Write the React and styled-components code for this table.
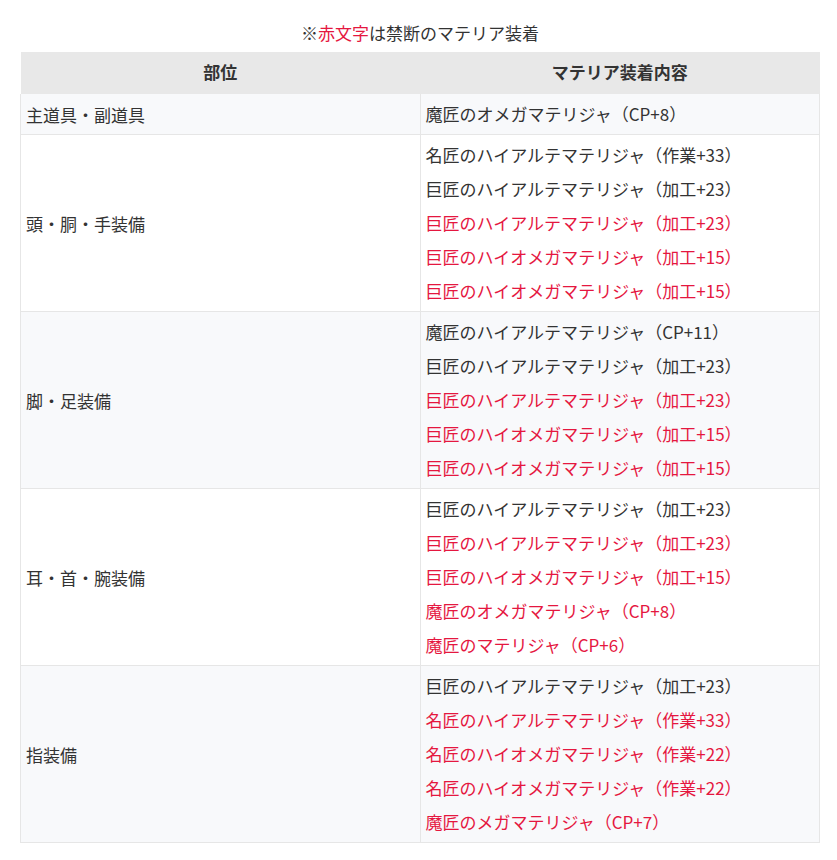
import React from 'react';
import styled, { createGlobalStyle } from 'styled-components';

const GlobalStyle = createGlobalStyle`
    body {
        margin: 0;
        background: #ffffff;
        font-family: "Noto Sans CJK JP", "Noto Sans", sans-serif;
        color: #333333;
    }
`

const rows = [
    { part: '主道具・副道具', items: [['魔匠のオメガマテリジャ（CP+8）', false]] },
    {
        part: '頭・胴・手装備',
        items: [
            ['名匠のハイアルテマテリジャ（作業+33）', false],
            ['巨匠のハイアルテマテリジャ（加工+23）', false],
            ['巨匠のハイアルテマテリジャ（加工+23）', true],
            ['巨匠のハイオメガマテリジャ（加工+15）', true],
            ['巨匠のハイオメガマテリジャ（加工+15）', true],
        ],
    },
    {
        part: '脚・足装備',
        items: [
            ['魔匠のハイアルテマテリジャ（CP+11）', false],
            ['巨匠のハイアルテマテリジャ（加工+23）', false],
            ['巨匠のハイアルテマテリジャ（加工+23）', true],
            ['巨匠のハイオメガマテリジャ（加工+15）', true],
            ['巨匠のハイオメガマテリジャ（加工+15）', true],
        ],
    },
    {
        part: '耳・首・腕装備',
        items: [
            ['巨匠のハイアルテマテリジャ（加工+23）', false],
            ['巨匠のハイアルテマテリジャ（加工+23）', true],
            ['巨匠のハイオメガマテリジャ（加工+15）', true],
            ['魔匠のオメガマテリジャ（CP+8）', true],
            ['魔匠のマテリジャ（CP+6）', true],
        ],
    },
    {
        part: '指装備',
        items: [
            ['巨匠のハイアルテマテリジャ（加工+23）', false],
            ['名匠のハイアルテマテリジャ（作業+33）', true],
            ['名匠のハイオメガマテリジャ（作業+22）', true],
            ['名匠のハイオメガマテリジャ（作業+22）', true],
            ['魔匠のメガマテリジャ（CP+7）', true],
        ],
    },
];

export default function App() {
    return (
        <>
            <GlobalStyle />
            <Wrapper>
                {/* note above the table */}
                <Caption>
                    ※<Red>赤文字</Red>は禁断のマテリア装着
                </Caption>
                <Table>
                    <thead>
                        <tr>
                            <Th>部位</Th>
                            <Th>マテリア装着内容</Th>
                        </tr>
                    </thead>
                    <tbody>
                        {rows.map((row, i) => (
                            <Row key={row.part} $odd={i % 2 === 0}>
                                <Td>{row.part}</Td>
                                <Td>
                                    {row.items.map(([text, red], j) => (
                                        <Line key={j} $red={red}>{text}</Line>
                                    ))}
                                </Td>
                            </Row>
                        ))}
                    </tbody>
                </Table>
            </Wrapper>
        </>
    );
}

const Wrapper = styled.div`
    padding: 20px 17px 0 20px;
`

const Caption = styled.p`
    margin: 0;
    height: 32px;
    line-height: 26px;
    text-align: center;
    font-size: 17px;
    color: #333333;
`

const Red = styled.span`
    color: #e5173f;
`

const Table = styled.table`
    width: 800px;
    border-collapse: collapse;
    table-layout: fixed;
    font-size: 17px;
`

const Th = styled.th`
    background: #e8e8e8;
    height: 40px;
    padding: 0 6px 2px;
    line-height: 26px;
    font-weight: bold;
    font-size: 17px;
    color: #333333;
    text-align: center;
    vertical-align: middle;
`

const Td = styled.td`
    border-left: 1px solid #e6e6e6;
    border-right: 1px solid #e6e6e6;
    padding: 3px 5px;
    vertical-align: middle;
    color: #333333;
`

const Row = styled.tr`
    background: ${p => (p.$odd ? '#f8f9fb' : '#ffffff')};
    border-bottom: 1px solid #e6e6e6;
`

const Line = styled.div`
    line-height: 34px;
    white-space: nowrap;
    color: ${p => (p.$red ? '#e5173f' : '#333333')};
`
